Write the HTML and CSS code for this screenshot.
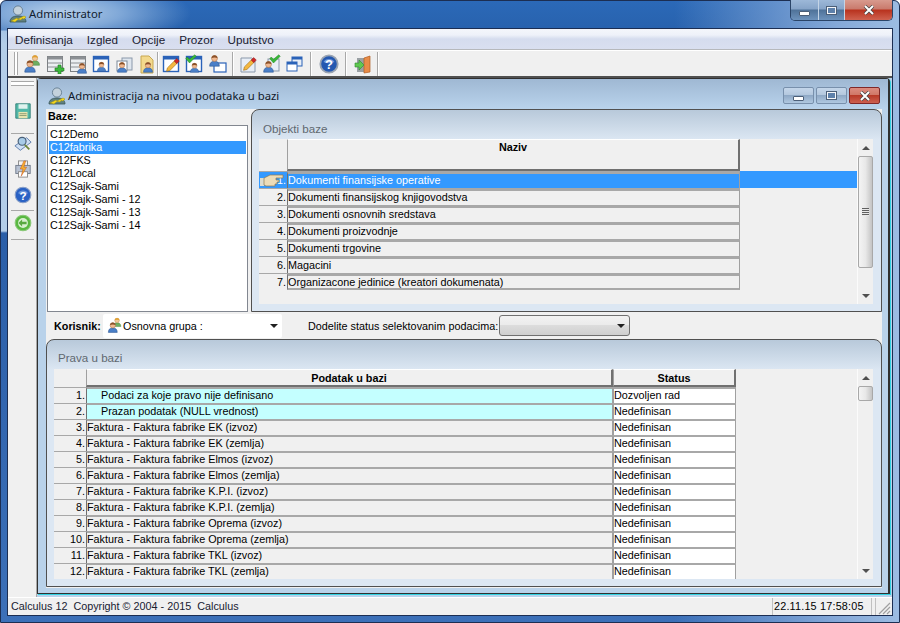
FILE: index.html
```html
<!DOCTYPE html>
<html lang="en">
<head>
    <meta charset="UTF-8">
    <title>Administrator</title>
    <link rel="stylesheet" href="styles.css">
</head>
<body>
    <svg class="sprite" xmlns="http://www.w3.org/2000/svg">
        <symbol id="user" viewBox="0 0 16 16">
            <path d="M2 15c0-4 2-6 6-6s6 2 6 6z" fill="#4a7fc8" stroke="#2d5590" stroke-width=".7"/>
            <circle cx="8" cy="5.5" r="3.6" fill="#f0b890" stroke="#a0683c" stroke-width=".6"/>
            <path d="M4.3 5.2C4.3 2.8 6 1.6 8 1.6s3.7 1.2 3.7 3.6C10 4 6 4 4.3 5.2z" fill="#8a5028"/>
        </symbol>
        <symbol id="userb" viewBox="0 0 16 16">
            <path d="M2 15c0-4 2-6 6-6s6 2 6 6z" fill="#6fae62" stroke="#48803e" stroke-width=".7"/>
            <circle cx="8" cy="5.5" r="3.6" fill="#f2c898" stroke="#b08040" stroke-width=".6"/>
            <path d="M4.3 5.2C4.3 2.8 6 1.6 8 1.6s3.7 1.2 3.7 3.6C10 4 6 4 4.3 5.2z" fill="#e0a030"/>
        </symbol>
        <symbol id="admin" viewBox="0 0 20 20">
            <path d="M2 18c0-4 3-6 8-6s8 2 8 6z" fill="#5f8080" stroke="#3a5656" stroke-width=".8"/>
            <circle cx="10" cy="6.5" r="4.6" fill="#c4d2dc" stroke="#5b7386" stroke-width=".8"/>
            <path d="M3 17l6-3 1 1 6-3 2 1-2 2-2-.5-1 1.500-3-.5-3 2.500z" fill="#f4d820" stroke="#9a8a10" stroke-width=".5"/>
        </symbol>
        <symbol id="win" viewBox="0 0 20 20">
            <rect x="2.500" y="2.500" width="15" height="15" fill="#fff" stroke="#2a62b8" stroke-width="1.400"/>
            <rect x="2.500" y="2.500" width="15" height="3" fill="#2a62b8"/>
        </symbol>
        <symbol id="table" viewBox="0 0 20 20">
            <rect x="2.500" y="2.500" width="15" height="15" fill="#eceff2" stroke="#7c8084"/>
            <rect x="2.500" y="2.500" width="15" height="3" fill="#8c9094"/>
            <path d="M3 9h14M3 13h14" stroke="#8c9094" fill="none"/>
        </symbol>
        <symbol id="pencil" viewBox="0 0 20 20">
            <path d="M3 18l1-4L13 5l3 3-9 9z" fill="#f4b840" stroke="#a06c10" stroke-width=".7"/>
            <path d="M12 6l3-3 3 3-3 3z" fill="#d02828" stroke="#801010" stroke-width=".5"/>
        </symbol>
        <symbol id="check" viewBox="0 0 16 12">
            <path d="M1 6l2-2 3 3 7-6 2 2-9 9z" fill="#38b838" stroke="#1c7c1c" stroke-width=".6"/>
        </symbol>
        <symbol id="help" viewBox="0 0 20 20">
            <circle cx="10" cy="10" r="8.700" fill="#2458b0" stroke="#9aa4b2" stroke-width="1.800"/>
            <path d="M4.500 8a6 5 0 0 1 11 0 8 4 0 0 1-11 0z" fill="#6f98dc"/>
            <text x="10" y="15" text-anchor="middle" font-family="Liberation Sans, sans-serif" font-weight="700" font-size="13" fill="#fff">?</text>
        </symbol>
    </svg>

    <div class="window">
        <div class="titlebar">
            <svg class="ico20"><use href="#admin"/></svg>
            <span class="title-text">Administrator</span>
            <div class="caption-group">
                <div class="cap cap-min"><i class="glyph-min"></i></div>
                <div class="cap cap-max"><i class="glyph-max"></i></div>
                <div class="cap cap-close"><svg class="glyph-x" viewBox="0 0 12 10"><path d="M2 1l8 8M10 1L2 9" stroke="#444" stroke-width="3.400"/><path d="M2 1l8 8M10 1L2 9" stroke="#fff" stroke-width="2"/></svg></div>
            </div>
        </div>

        <div class="client">
            <div class="menubar">
                <span>Definisanja</span>
                <span>Izgled</span>
                <span>Opcije</span>
                <span>Prozor</span>
                <span>Uputstvo</span>
            </div>

            <div class="toolbar">
                <i class="grip-v"></i>
                <div class="tool-group g1">
                    <svg class="tb" viewBox="0 0 20 20"><use href="#userb" x="7" y="0" width="12" height="12"/><use href="#user" x="1" y="5" width="14" height="14"/></svg>
                    <svg class="tb" viewBox="0 0 20 20"><use href="#table"/><path d="M10 14h3v-3h3v3h3v3h-3v3h-3v-3h-3z" fill="#3cb83c" stroke="#1c7c1c" stroke-width=".6"/></svg>
                    <svg class="tb" viewBox="0 0 20 20"><use href="#table"/><use href="#user" x="8" y="8" width="12" height="12"/></svg>
                    <svg class="tb" viewBox="0 0 20 20"><use href="#win"/><use href="#user" x="5" y="7" width="11" height="11"/></svg>
                    <svg class="tb" viewBox="0 0 20 20"><rect x="8" y="4" width="10" height="12" fill="#dfe6ee" stroke="#8a98aa"/><rect x="3" y="7" width="10" height="10" fill="#fff" stroke="#7a8898"/><use href="#user" x="2" y="7" width="12" height="12"/></svg>
                    <svg class="tb" viewBox="0 0 20 20"><path d="M4 2h8l4 4v13H4z" fill="#f3d98c" stroke="#c8a850"/><use href="#user" x="5" y="7" width="12" height="12"/></svg>
                </div>
                <div class="tool-group g2">
                    <svg class="tb" viewBox="0 0 20 20"><use href="#win"/><use href="#pencil" x="3" y="2" width="17" height="17"/></svg>
                    <svg class="tb" viewBox="0 0 20 20"><use href="#win"/><use href="#user" x="5" y="8" width="11" height="11"/><use href="#check" x="1" y="0" width="12" height="9"/></svg>
                    <svg class="tb" viewBox="0 0 20 20"><rect x="7" y="9" width="12" height="9" fill="#fff" stroke="#2a62b8" stroke-width="1.200"/><use href="#user" x="1" y="0" width="13" height="13"/></svg>
                </div>
                <div class="tool-group g3">
                    <svg class="tb" viewBox="0 0 20 20"><path d="M3 4h11l3 3v11H3z" fill="#e8eef6" stroke="#8a98aa"/><use href="#pencil" x="3" y="1" width="17" height="17"/></svg>
                    <svg class="tb" viewBox="0 0 20 20"><rect x="7" y="5" width="11" height="12" fill="#e8eef6" stroke="#8a98aa"/><use href="#user" x="1" y="6" width="13" height="13"/><use href="#check" x="8" y="0" width="12" height="9"/></svg>
                    <svg class="tb" viewBox="0 0 20 20"><rect x="8" y="3" width="10" height="9" fill="#e8eef6" stroke="#2a62b8"/><rect x="8" y="3" width="10" height="2.500" fill="#2a62b8"/><rect x="3" y="8" width="10" height="9" fill="#fff" stroke="#2a62b8"/><rect x="3" y="8" width="10" height="2.500" fill="#2a62b8"/></svg>
                </div>
                <div class="tool-group g4">
                    <svg class="tb" viewBox="0 0 20 20"><use href="#help"/></svg>
                </div>
                <div class="tool-group g5">
                    <svg class="tb" viewBox="0 0 20 20"><rect x="4" y="4" width="8" height="14" fill="#9aa0a4"/><path d="M11 4l6-2v16l-6 1z" fill="#e88c48" stroke="#b05c20" stroke-width=".7"/><path d="M2 9h4V6l5 5-5 5v-3H2z" fill="#60c850" stroke="#2c8c2c" stroke-width=".6"/></svg>
                </div>
                <i class="tb-end"></i>
            </div>

            <div class="workarea">
                <div class="sidebar">
                    <i class="grip-h"></i>
                    <div class="side-group sg-save">
                        <svg class="side-ico" viewBox="0 0 20 20"><path d="M2 2h16v16H2z" fill="#52b8a8" stroke="#2f7f78"/><rect x="5" y="2.500" width="10" height="5" fill="#dff2ee"/><rect x="5" y="11" width="10" height="7" fill="#e8e4b0"/><path d="M6 13h8M6 15h8" stroke="#8a9a70"/></svg>
                    </div>
                    <div class="side-group sg-tools">
                        <svg class="side-ico" viewBox="0 0 20 20"><path d="M1 12L14 3l5 5-12 9z" fill="#cfe0f4" stroke="#5878a8"/><circle cx="9" cy="7" r="4.400" fill="#a8cce8" stroke="#4a6078" stroke-width="1.300"/><path d="M12 11l5 5" stroke="#70883c" stroke-width="2"/></svg>
                        <svg class="side-ico" viewBox="0 0 20 20"><rect x="5" y="1" width="10" height="6" fill="#f4f4f4" stroke="#888"/><rect x="2" y="6" width="16" height="9" fill="#b8c2d2" stroke="#707a8a"/><rect x="5" y="13" width="10" height="6" fill="#fff" stroke="#888"/><path d="M11 1L7 10h3l-2 8 6-10h-3l2-7z" fill="#f4b030" stroke="#c04818" stroke-width=".5"/></svg>
                    </div>
                    <div class="side-group sg-help">
                        <svg class="side-ico" viewBox="0 0 20 20"><circle cx="10" cy="10" r="8.700" fill="#2a62c4" stroke="#8aa0c8" stroke-width="1.200"/><path d="M4.500 8a6 5 0 0 1 11 0 8 4 0 0 1-11 0z" fill="#6f98dc"/><text x="10" y="15" text-anchor="middle" font-family="Liberation Sans, sans-serif" font-weight="700" font-size="13" fill="#fff">?</text></svg>
                    </div>
                    <div class="side-group sg-back">
                        <svg class="side-ico" viewBox="0 0 20 20"><circle cx="10" cy="10" r="8.700" fill="#58b840" stroke="#8ac878" stroke-width="1.200"/><circle cx="10" cy="10" r="5.500" fill="#d8f0d0"/><path d="M5 10l4-4v2.500h5v3H9V14z" fill="#58a840"/></svg>
                    </div>
                </div>

                <div class="mdi">
                    <div class="child">
                        <div class="child-title">
                            <svg class="ico20"><use href="#admin"/></svg>
                            <span class="child-title-text">Administracija na nivou podataka u bazi</span>
                            <div class="child-caps">
                                <div class="ccap"><i class="glyph-min"></i></div>
                                <div class="ccap"><i class="glyph-max"></i></div>
                                <div class="ccap ccap-close"><svg class="glyph-x" viewBox="0 0 12 10"><path d="M2 1l8 8M10 1L2 9" stroke="#444" stroke-width="3.400"/><path d="M2 1l8 8M10 1L2 9" stroke="#fff" stroke-width="2"/></svg></div>
                            </div>
                        </div>

                        <div class="child-body">
                            <div class="upper">
                                <div class="bases">
                                    <div class="bases-label">Baze:</div>
                                    <div class="listbox">
                                        <div>C12Demo</div>
                                        <div class="selected">C12fabrika</div>
                                        <div>C12FKS</div>
                                        <div>C12Local</div>
                                        <div>C12Sajk-Sami</div>
                                        <div>C12Sajk-Sami - 12</div>
                                        <div>C12Sajk-Sami - 13</div>
                                        <div>C12Sajk-Sami - 14</div>
                                    </div>
                                </div>

                                <div class="panel panel-objects">
                                    <div class="panel-title">Objekti baze</div>
                                    <div class="grid-wrap grid-objects">
                                        <div class="grid">
                                            <div class="ghead">
                                                <div class="corner"></div>
                                                <div class="hcell col-naziv">Naziv</div>
                                            </div>
                                            <div class="grow active"><div class="num">1.</div><div class="cell col-naziv">Dokumenti finansijske operative</div></div>
                                            <div class="grow"><div class="num">2.</div><div class="cell col-naziv">Dokumenti finansijskog knjigovodstva</div></div>
                                            <div class="grow"><div class="num">3.</div><div class="cell col-naziv">Dokumenti osnovnih sredstava</div></div>
                                            <div class="grow"><div class="num">4.</div><div class="cell col-naziv">Dokumenti proizvodnje</div></div>
                                            <div class="grow"><div class="num">5.</div><div class="cell col-naziv">Dokumenti trgovine</div></div>
                                            <div class="grow"><div class="num">6.</div><div class="cell col-naziv">Magacini</div></div>
                                            <div class="grow"><div class="num">7.</div><div class="cell col-naziv">Organizacone jedinice (kreatori dokumenata)</div></div>
                                            <svg class="hand" viewBox="0 0 24 14"><path d="M0 5h4v8H0z" fill="#dcdcd0"/><path d="M4 5l6-3h13v3h-7v2h3v2h-2v2h-2v2H6l-2-1z" fill="#ecdcb8" stroke="#8c7850" stroke-width=".7"/></svg>
                                        </div>
                                        <div class="scrollbar">
                                            <i class="arrow-up"></i>
                                            <div class="thumb thumb-long"><i class="thumb-grip"></i></div>
                                            <i class="arrow-down"></i>
                                        </div>
                                    </div>
                                </div>
                            </div>

                            <div class="filters">
                                <span class="korisnik">Korisnik:</span>
                                <div class="combo combo-user">
                                    <svg class="combo-ico" viewBox="0 0 20 20"><use href="#userb" x="7" y="0" width="12" height="12"/><use href="#user" x="1" y="5" width="14" height="14"/></svg>
                                    <span>Osnovna grupa :</span>
                                    <i class="combo-arrow"></i>
                                </div>
                                <span class="status-label">Dodelite status selektovanim podacima:</span>
                                <div class="combo combo-status"><i class="combo-arrow"></i></div>
                            </div>

                            <div class="panel panel-rights">
                                <div class="panel-title">Prava u bazi</div>
                                <div class="grid-wrap grid-rights">
                                    <div class="grid">
                                        <div class="ghead">
                                            <div class="corner"></div>
                                            <div class="hcell col-data">Podatak u bazi</div>
                                            <div class="hcell col-status">Status</div>
                                        </div>
                                        <div class="grow def"><div class="num">1.</div><div class="cell col-data indent">Podaci za koje pravo nije definisano</div><div class="cell col-status">Dozvoljen rad</div></div>
                                        <div class="grow def"><div class="num">2.</div><div class="cell col-data indent">Prazan podatak (NULL vrednost)</div><div class="cell col-status">Nedefinisan</div></div>
                                        <div class="grow"><div class="num">3.</div><div class="cell col-data">Faktura - Faktura fabrike EK (izvoz)</div><div class="cell col-status">Nedefinisan</div></div>
                                        <div class="grow"><div class="num">4.</div><div class="cell col-data">Faktura - Faktura fabrike EK (zemlja)</div><div class="cell col-status">Nedefinisan</div></div>
                                        <div class="grow"><div class="num">5.</div><div class="cell col-data">Faktura - Faktura fabrike Elmos (izvoz)</div><div class="cell col-status">Nedefinisan</div></div>
                                        <div class="grow"><div class="num">6.</div><div class="cell col-data">Faktura - Faktura fabrike Elmos (zemlja)</div><div class="cell col-status">Nedefinisan</div></div>
                                        <div class="grow"><div class="num">7.</div><div class="cell col-data">Faktura - Faktura fabrike K.P.I. (izvoz)</div><div class="cell col-status">Nedefinisan</div></div>
                                        <div class="grow"><div class="num">8.</div><div class="cell col-data">Faktura - Faktura fabrike K.P.I. (zemlja)</div><div class="cell col-status">Nedefinisan</div></div>
                                        <div class="grow"><div class="num">9.</div><div class="cell col-data">Faktura - Faktura fabrike Oprema (izvoz)</div><div class="cell col-status">Nedefinisan</div></div>
                                        <div class="grow"><div class="num">10.</div><div class="cell col-data">Faktura - Faktura fabrike Oprema (zemlja)</div><div class="cell col-status">Nedefinisan</div></div>
                                        <div class="grow"><div class="num">11.</div><div class="cell col-data">Faktura - Faktura fabrike TKL (izvoz)</div><div class="cell col-status">Nedefinisan</div></div>
                                        <div class="grow"><div class="num">12.</div><div class="cell col-data">Faktura - Faktura fabrike TKL (zemlja)</div><div class="cell col-status">Nedefinisan</div></div>
                                    </div>
                                    <div class="scrollbar">
                                        <i class="arrow-up"></i>
                                        <div class="thumb thumb-short"></div>
                                        <i class="arrow-down"></i>
                                    </div>
                                </div>
                            </div>
                        </div>
                    </div>
                </div>
            </div>

            <div class="statusbar">
                <span class="status-main">Calculus 12&nbsp; Copyright © 2004 - 2015&nbsp; Calculus</span>
                <span class="status-time">22.11.15 17:58:05</span>
                <i class="status-empty"></i>
                <svg class="size-grip" viewBox="0 0 14 14"><path d="M13 2L2 13M13 6L6 13M13 10l-3 3" stroke="#a0a0a0" stroke-width="1.200"/></svg>
            </div>
        </div>
    </div>
</body>
</html>
```

FILE: styles.css
```css
* {
    box-sizing: border-box;
}

html, body {
    margin: 0;
    height: 100%;
    overflow: hidden;
}

body {
    font-family: "Liberation Sans", Arial, sans-serif;
    font-size: 10.8px;
    color: #000;
    background: #fff;
}

i {
    display: block;
}

.sprite {
    display: none;
}

.ico20 {
    width: 20px;
    height: 20px;
    flex: none;
}

/* outer window frame */
.window {
    width: 900px;
    height: 623px;
    display: flex;
    flex-direction: column;
    padding: 0 7px 7px;
    border: 1px solid #1c2e52;
    border-radius: 6px 6px 0 0;
    background:
        radial-gradient(ellipse 130px 34px at 60px 12px, #b7cfe9 0%, rgba(150, 185, 225, .8) 45%, rgba(47, 108, 184, 0) 100%),
        linear-gradient(to right, rgba(47, 108, 184, 0) 75%, #84a8d8 93%, #9cbce2 100%),
        linear-gradient(to bottom, #2b69b8 0, #2862ad 29px, #b3cde8 30px, #b3cde8 230px, #2a5ea8 232px, #3c70b8 623px);
}

.titlebar {
    height: 28px;
    flex: none;
    display: flex;
    align-items: center;
    padding: 0 0 3px 0;
    position: relative;
}

.title-text {
    font-family: "Noto Sans", sans-serif;
    font-size: 11.3px;
    margin-left: 1px;
    color: #10202f;
}

.caption-group {
    position: absolute;
    top: -1px;
    right: -1px;
    display: flex;
    height: 21px;
    border: 1px solid #2a4468;
    border-top: 0;
    border-radius: 0 0 5px 5px;
    overflow: hidden;
}

.cap {
    display: flex;
    align-items: center;
    justify-content: center;
    border-right: 1px solid #c4d4e6;
    background: linear-gradient(to bottom, #9db8d8 0, #86a4c8 45%, #4f7299 50%, #6d92bc 100%);
}

.cap-min {
    width: 28px;
}

.cap-max {
    width: 26px;
}

.cap-close {
    width: 47px;
    border-right: 0;
    background: linear-gradient(to bottom, #d89a8e 0, #c97a6c 45%, #b8321e 50%, #cf6250 100%);
}

.glyph-min {
    width: 11px;
    height: 5px;
    margin-top: 6px;
    background: #fff;
    border: 1px solid #4c5f78;
    border-radius: 1px;
}

.glyph-max {
    width: 11px;
    height: 9px;
    background: #5d80aa;
    border: 2px solid #f4f6f9;
    outline: 1px solid #4c5f78;
    outline-offset: -1px;
}

.glyph-x {
    width: 12px;
    height: 10px;
}

.client {
    flex: 1;
    min-height: 0;
    display: flex;
    flex-direction: column;
    background: #f0f0f0;
    outline: 1px solid #1c2e52;
}

/* menu and toolbar */
.menubar {
    height: 21px;
    flex: none;
    display: flex;
    align-items: center;
    padding: 1px 0 0 7px;
    gap: 14px;
    font-size: 11.7px;
    color: #1a2030;
    background: linear-gradient(to bottom, #f4f6fb 0, #eef1f9 30%, #d5dcee 50%, #d9dff0 100%);
    border-bottom: 1px solid #b6b8bc;
}

.toolbar {
    height: 26px;
    flex: none;
    display: flex;
    align-items: center;
    padding-left: 6px;
    background: #f0f0f0;
    border-top: 1px solid #fff;
}

.grip-v {
    width: 4px;
    height: 23px;
    margin-right: 1px;
    border-left: 1px solid #a8a8a8;
    border-right: 1px solid #a8a8a8;
    background: #fff;
}

.tool-group {
    height: 24px;
    display: flex;
    align-items: center;
    gap: 3px;
    padding-right: 3px;
    border-right: 1px solid #a8a8a8;
    box-shadow: 1px 0 0 #fff;
}

.g1 {
    padding-left: 3px;
    width: 139px;
}

.g2 {
    padding-left: 3px;
    width: 75px;
}

.g3 {
    padding-left: 5px;
    width: 78px;
}

.g4 {
    padding-left: 8px;
    width: 35px;
}

.g5 {
    padding-left: 7px;
    width: 32px;
}

.tb {
    width: 20px;
    height: 20px;
    flex: none;
}

.tb-end {
    flex: 1;
    height: 24px;
}

/* left toolbar + mdi */
.workarea {
    flex: 1;
    min-height: 0;
    display: flex;
    border-top: 2px solid #505050;
}

.sidebar {
    width: 29px;
    flex: none;
    display: flex;
    flex-direction: column;
    align-items: stretch;
    padding: 3px 0 0 1px;
    background: #f0f0f0;
    border-right: 1px solid #a8a8a8;
}

.grip-h {
    height: 5px;
    margin: 0 2px 7px;
    border-top: 1px solid #a8a8a8;
    border-bottom: 1px solid #a8a8a8;
    background: #fff;
}

.side-group {
    display: flex;
    flex-direction: column;
    align-items: center;
    border-bottom: 1px solid #a8a8a8;
    margin: 0 2px;
}

.sg-save {
    height: 41px;
    padding-top: 9px;
}

.sg-tools {
    height: 50px;
    gap: 7px;
    padding-top: 1px;
    border-bottom: 0;
}

.sg-help {
    height: 27px;
    padding-top: 2px;
}

.sg-back {
    height: 29px;
    padding-top: 3px;
}

.side-ico {
    width: 18px;
    height: 18px;
    flex: none;
}

.mdi {
    flex: 1;
    min-width: 0;
    display: flex;
    background: #b9d2ea;
}

.child {
    flex: 1;
    display: flex;
    flex-direction: column;
    margin: 0 2px 3px 0;
    border: 1px solid #303030;
    border-right: 2px solid #303030;
    border-radius: 4px 4px 0 0;
    box-shadow: 1px 1px 0 #30d0e0;
    background: #b9d2ea;
    padding: 0 6px 5px 8px;
}

.child-title {
    height: 30px;
    flex: none;
    display: flex;
    align-items: center;
    margin: 0 -6px 0 -8px;
    padding: 3px 8px 0 9px;
    background: linear-gradient(to bottom, #9fb8d3 0, #b9d3ec 100%);
}

.child-title-text {
    font-family: "Noto Sans", sans-serif;
    font-size: 11.3px;
    margin-left: 1px;
    color: #101828;
}

.child-caps {
    margin-left: auto;
    display: flex;
    gap: 2px;
}

.ccap {
    width: 31px;
    height: 17px;
    display: flex;
    align-items: center;
    justify-content: center;
    border: 1px solid #7890ac;
    border-radius: 2px;
    background: linear-gradient(to bottom, #c4d6ea 0, #b4c8de 45%, #8fa9c6 50%, #b0c8e0 100%);
}

.ccap-close {
    border-color: #802828;
    background: linear-gradient(to bottom, #dc8c80 0, #d07868 45%, #b83a28 50%, #cc6050 100%);
}

.child-body {
    flex: 1;
    min-height: 0;
    display: flex;
    flex-direction: column;
    background: #f0f0f0;
}

.upper {
    height: 203px;
    flex: none;
    display: flex;
    padding-left: 1px;
}

.bases {
    width: 204px;
    flex: none;
    display: flex;
    flex-direction: column;
}

.bases-label {
    height: 16px;
    padding: 1px 0 0 1px;
    font-weight: 700;
    line-height: 13px;
}

.listbox {
    flex: 1;
    width: 201px;
    padding: 2px 1px 1px;
    background: #fff;
    border: 1px solid #828790;
}

.listbox div {
    height: 13px;
    line-height: 13px;
    padding-left: 1px;
}

.listbox .selected {
    background: #3399ff;
    color: #fff;
}

/* group panels */
.panel {
    display: flex;
    flex-direction: column;
    border: 1px solid #505050;
    border-radius: 8px 8px 0 0;
    padding: 0 8px 7px 7px;
}

.panel-objects {
    flex: 1;
    background: linear-gradient(to bottom, #b8c9da 0, #dce7f3 30px);
}

.panel-rights {
    flex: 1;
    min-height: 0;
    margin-bottom: 1px;
    background: linear-gradient(to bottom, #b8c9da 0, #dce7f3 30px);
}

.panel-title {
    height: 29px;
    flex: none;
    padding: 12px 0 0 4px;
    font-size: 11.6px;
    line-height: 14px;
    color: #606870;
}

.panel-rights .panel-title {
    height: 29px;
    padding-top: 11px;
}

.grid-wrap {
    flex: 1;
    min-height: 0;
    display: flex;
    background: #f0f0f0;
}

.grid {
    flex: 1;
    min-width: 0;
    position: relative;
}

.ghead {
    display: flex;
}

.corner {
    flex: none;
    background: #f0f0f0;
}

.hcell {
    display: flex;
    justify-content: center;
    font-weight: 700;
    background: #f0f0f0;
    border-top: 1px solid #fff;
    border-left: 1px solid #a0a0a0;
    border-right: 2px solid #707070;
    border-bottom: 2px solid #707070;
}

.grow {
    display: flex;
}

.num {
    flex: none;
    text-align: right;
    padding: 1px 1px 0 0;
    background: #f0f0f0;
    border-top: 1px solid #a8a8a8;
}

.cell {
    white-space: nowrap;
    overflow: hidden;
    border-top: 2px solid #a8a8a8;
    border-left: 1px solid #707070;
    border-right: 1px solid #a0a0a0;
}

/* objects grid */
.grid-objects .corner,
.grid-objects .num {
    width: 28px;
}

.grid-objects .col-naziv {
    width: 453px;
}

.grid-objects .ghead {
    height: 32px;
}

.grid-objects .hcell {
    line-height: 15px;
}

.grid-objects .grow {
    height: 17px;
    line-height: 15px;
}

.grid-objects .cell {
    border-top: 3px solid #a8a8a8;
    line-height: 13px;
}

.grid-objects .grow:last-of-type .cell {
    border-bottom: 2px solid #a8a8a8;
}

.grow.active {
    background: #3399ff;
}

.grow.active .num,
.grow.active .cell {
    background: #3399ff;
    color: #fff;
}

.hand {
    position: absolute;
    left: 1px;
    top: 34px;
    width: 24px;
    height: 14px;
}

/* rights grid */
.grid-rights .corner,
.grid-rights .num {
    width: 32px;
}

.grid-rights .ghead {
    height: 18px;
    line-height: 15px;
}

.grid-rights .hcell {
    padding-top: 1px;
}

.grid-rights .col-data {
    width: 527px;
}

.grid-rights .col-status {
    width: 123px;
}

.grid-rights .grow {
    height: 16px;
    line-height: 13px;
}

.grid-rights .cell {
    border-top-width: 2px;
}

.grid-rights .cell.col-status {
    background: #fff;
    border-left: 1px solid #a0a0a0;
    border-right: 1px solid #a0a0a0;
}

.grow.def .col-data {
    background: #c4ffff;
}

.indent {
    padding-left: 14px;
}

/* scrollbars */
.scrollbar {
    width: 16px;
    flex: none;
    display: flex;
    flex-direction: column;
    align-items: center;
    background: #f0f0f0;
    border-left: 1px solid #fbfbfb;
}

.arrow-up,
.arrow-down {
    width: 0;
    height: 0;
    flex: none;
    border-left: 4px solid transparent;
    border-right: 4px solid transparent;
}

.arrow-up {
    border-bottom: 4px solid #505050;
    margin: 7px 0 6px;
}

.arrow-down {
    border-top: 4px solid #505050;
    margin: auto 0 6px;
}

.thumb {
    width: 15px;
    flex: none;
    display: flex;
    align-items: center;
    justify-content: center;
    border: 1px solid #a8a8a8;
    border-radius: 2px;
    background: linear-gradient(to right, #f4f4f4 0, #e8e8e8 50%, #c4c4c4 100%);
}

.thumb-long {
    height: 112px;
}

.thumb-short {
    height: 15px;
    margin-top: 0;
}

.thumb-grip {
    width: 7px;
    height: 8px;
    background: repeating-linear-gradient(to bottom, #606060 0, #606060 1px, #e8e8e8 1px, #e8e8e8 2px);
}

/* filter row */
.filters {
    height: 27px;
    flex: none;
    display: flex;
    align-items: center;
    padding-left: 8px;
}

.korisnik {
    width: 49px;
    font-weight: 700;
}

.combo {
    display: flex;
    align-items: center;
    position: relative;
}

.combo-user {
    width: 179px;
    height: 24px;
    background: #fff;
    border-radius: 2px;
    padding-left: 3px;
}

.combo-ico {
    width: 17px;
    height: 17px;
    flex: none;
}

.status-label {
    margin-left: 26px;
    margin-right: 1px;
}

.combo-status {
    width: 131px;
    height: 21px;
    border: 1px solid #707070;
    border-radius: 3px;
    background: linear-gradient(to bottom, #f2f2f2 0, #ebebeb 45%, #dcdcdc 50%, #cfcfcf 100%);
}

.combo-arrow {
    position: absolute;
    right: 4px;
    top: 50%;
    margin-top: -2px;
    width: 0;
    height: 0;
    border-left: 4px solid transparent;
    border-right: 4px solid transparent;
    border-top: 4px solid #202020;
}

/* status bar */
.statusbar {
    height: 18px;
    flex: none;
    display: flex;
    align-items: center;
    background: #f0f0f0;
    border-top: 1px solid #fff;
    position: relative;
}

.status-main {
    flex: 1;
    padding-left: 3px;
    color: #182030;
    align-self: stretch;
    line-height: 17px;
}

.status-time {
    width: 100px;
    align-self: stretch;
    line-height: 16px;
    padding-left: 1px;
    letter-spacing: .2px;
    border-left: 1px solid #c0c0c0;
    border-right: 1px solid #c0c0c0;
    white-space: nowrap;
}

.status-empty {
    width: 4px;
    align-self: stretch;
    border-right: 1px solid #c0c0c0;
}

.size-grip {
    width: 16px;
    height: 14px;
    margin-top: 3px;
}
```
